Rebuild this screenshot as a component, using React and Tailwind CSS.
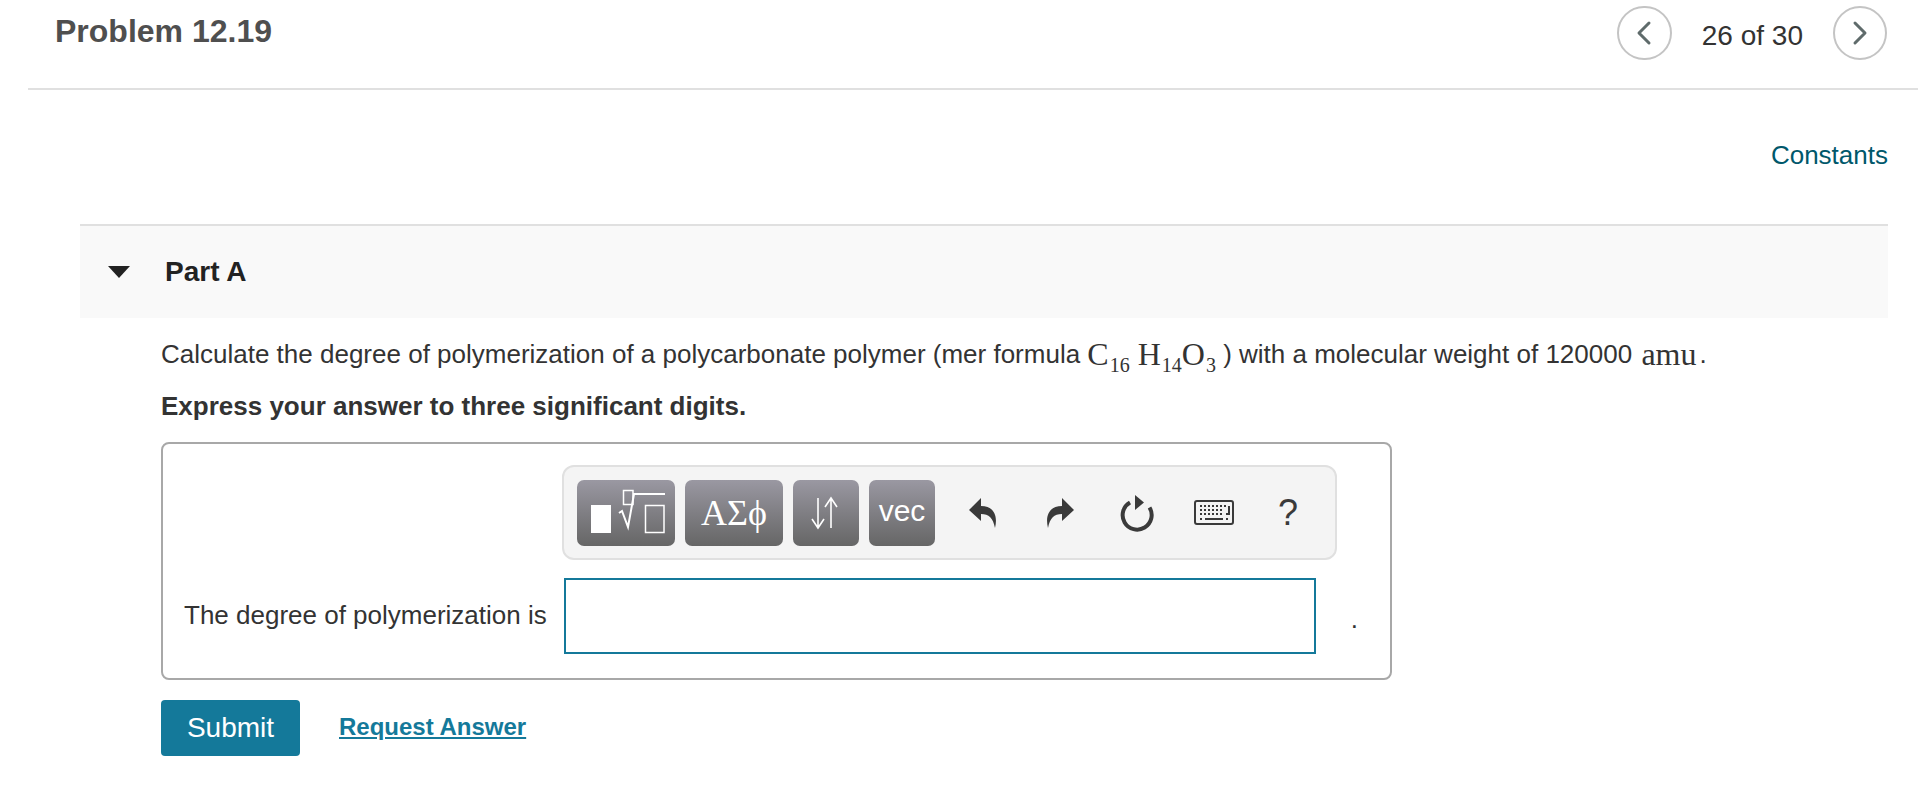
import { ChevronLeft, ChevronRight } from "lucide-react";

const SANS = "font-['Liberation_Sans',Arial,sans-serif]";
const SERIF = "font-['Liberation_Serif','Times_New_Roman',serif]";

function Sub({ children }) {
  return <sub className="ml-[1px] text-[20px] leading-none align-[-2px]">{children}</sub>;
}

function GreyButton({ w, children }) {
  return (
    <div
      className={`${w} flex h-[66px] items-center justify-center rounded-[7px] bg-gradient-to-b from-[#9a98a2] to-[#666666] text-white`}
    >
      {children}
    </div>
  );
}

function Toolbar() {
  return (
    <div className="flex h-[95px] w-[775px] items-center rounded-[12px] border-2 border-[#e0e0e0] bg-[#f4f4f4] pl-[13px]">
      <div className="flex gap-[10px]">
        <GreyButton w="w-[98px]">
          <svg width="98" height="66" viewBox="0 0 98 66" fill="none" stroke="white" strokeWidth="1.5">
            <rect x="14" y="25" width="20" height="28" fill="white" stroke="none" />
            <rect x="46.5" y="10.5" width="9.5" height="14" />
            <path d="M42 33l3-2 6 16 6-33h31" strokeWidth="2" />
            <rect x="68.5" y="25.5" width="18.5" height="27" />
          </svg>
        </GreyButton>
        <GreyButton w="w-[98px]">
          <span className={`${SERIF} text-[36px] leading-none`}>ΑΣϕ</span>
        </GreyButton>
        <GreyButton w="w-[66px]">
          <svg width="66" height="66" viewBox="0 0 66 66" fill="none" stroke="white" strokeWidth="1.6">
            <path d="M25 18v30M19 39l6 9 6-9" />
            <path d="M38 48V18M32 27l6-9 6 9" />
          </svg>
        </GreyButton>
        <GreyButton w="w-[66px]">
          <span className={`${SANS} text-[30px] leading-none -mt-[4px]`}>vec</span>
        </GreyButton>
      </div>
      <div className="ml-[33px] flex items-center text-[#3a3a3a]">
        <svg width="30" height="32" viewBox="0 0 30 32" fill="currentColor">
          <path d="M13 1L1 13l12 11v-7c8 0 12 4 14 14 3-12-1-22-14-22z" />
        </svg>
        <svg className="ml-[47px]" width="30" height="32" viewBox="0 0 30 32" fill="currentColor">
          <path d="M17 1l12 12-12 11v-7C9 17 5 21 3 31 0 19 4 9 17 9z" />
        </svg>
        <svg className="ml-[44px]" width="36" height="38" viewBox="0 0 36 38" fill="none">
          <path d="M11 8.5A14.5 14.5 0 1 0 30.5 13.5" stroke="currentColor" strokeWidth="4" />
          <path d="M16 1l9 7.5-9 7.5z" fill="currentColor" />
        </svg>
        <svg className="ml-[39px]" width="40" height="25" viewBox="0 0 40 25" fill="none">
          <rect x="1" y="1" width="38" height="23" rx="2" stroke="currentColor" strokeWidth="2" />
          <path d="M6 6h26M6 10h24M6 14h24" stroke="currentColor" strokeWidth="2" strokeDasharray="2 2" />
          <path d="M32 14h3V6" stroke="currentColor" strokeWidth="2" />
          <path d="M6 19h2M11 19h18M32 19h2" stroke="currentColor" strokeWidth="2" />
        </svg>
        <span className={`${SANS} ml-[44px] text-[36px] leading-none`}>?</span>
      </div>
    </div>
  );
}

export default function App() {
  return (
    <div className={`${SANS} h-[806px] w-[1918px] overflow-hidden bg-white text-[#333333]`}>
      <header className="ml-[28px] flex h-[90px] items-start justify-between border-b-2 border-[#e0e0e0] pl-[27px] pr-[31px]">
        <h1 className="mt-[12px] text-[32px] font-bold leading-[38px] text-[#4f4f4f]">Problem 12.19</h1>
        <nav className="mt-[6px] flex items-center">
          <button className="flex h-[54px] w-[55px] items-center justify-center rounded-full border-2 border-[#c4c4c4] text-[#5f6b6b]">
            <ChevronLeft size={40} strokeWidth={1.8} />
          </button>
          <span className="mx-[30px] mt-[5px] text-[28px] leading-none">26 of 30</span>
          <button className="flex h-[54px] w-[54px] items-center justify-center rounded-full border-2 border-[#c4c4c4] text-[#5f6b6b]">
            <ChevronRight size={40} strokeWidth={1.8} />
          </button>
        </nav>
      </header>

      <div className="flex h-[134px] items-start justify-end pr-[30px] pt-[50px]">
        <a className="text-[26px] leading-[30px] text-[#00586b]">Constants</a>
      </div>

      <section className="ml-[80px] flex h-[94px] w-[1808px] items-center border-t-2 border-[#e0e0e0] bg-[#f9f9f9]">
        <svg className="ml-[28px]" width="22" height="12" viewBox="0 0 22 12" fill="#222222">
          <path d="M0 0h22L11 12z" />
        </svg>
        <h2 className="ml-[35px] text-[28px] font-bold leading-none text-[#222222]">Part A</h2>
      </section>

      <main className="pl-[161px]">
        <p className="mt-[17px] flex h-[38px] items-center text-[26px] leading-[38px] whitespace-pre">
          <span>Calculate the degree of polymerization of a polycarbonate polymer (mer formula </span>
          <span className={`${SERIF} text-[32px]`}>
            C<Sub>16</Sub> H<Sub>14</Sub>O<Sub>3</Sub>
          </span>
          <span> ) with a molecular weight of 120000 </span>
          <span className={`${SERIF} ml-[2px] text-[32px]`}>amu</span>
          <span className="ml-[3px]">.</span>
        </p>
        <p className="mt-[14px] text-[26px] font-bold leading-[38px]">Express your answer to three significant digits.</p>

        <div className="mt-[17px] h-[238px] w-[1231px] rounded-[8px] border-2 border-[#a8a8a8] pl-[21px] pt-[21px]">
          <div className="pl-[378px]">
            <Toolbar />
          </div>
          <div className="mt-[18px] flex items-center">
            <span className="-mt-[2px] text-[26px] leading-none">The degree of polymerization is</span>
            <input className="ml-[17px] h-[76px] w-[752px] border-2 border-[#14799a] bg-white outline-none" />
            <span className="ml-[35px] mt-[6px] text-[26px] leading-none">.</span>
          </div>
        </div>

        <div className="mt-[20px] flex items-center">
          <button className="h-[56px] w-[139px] rounded-[4px] bg-[#14799a] text-[28px] text-white">Submit</button>
          <a className="ml-[39px] -mt-[3px] text-[24px] font-bold leading-none text-[#14799a] underline">Request Answer</a>
        </div>
      </main>
    </div>
  );
}
